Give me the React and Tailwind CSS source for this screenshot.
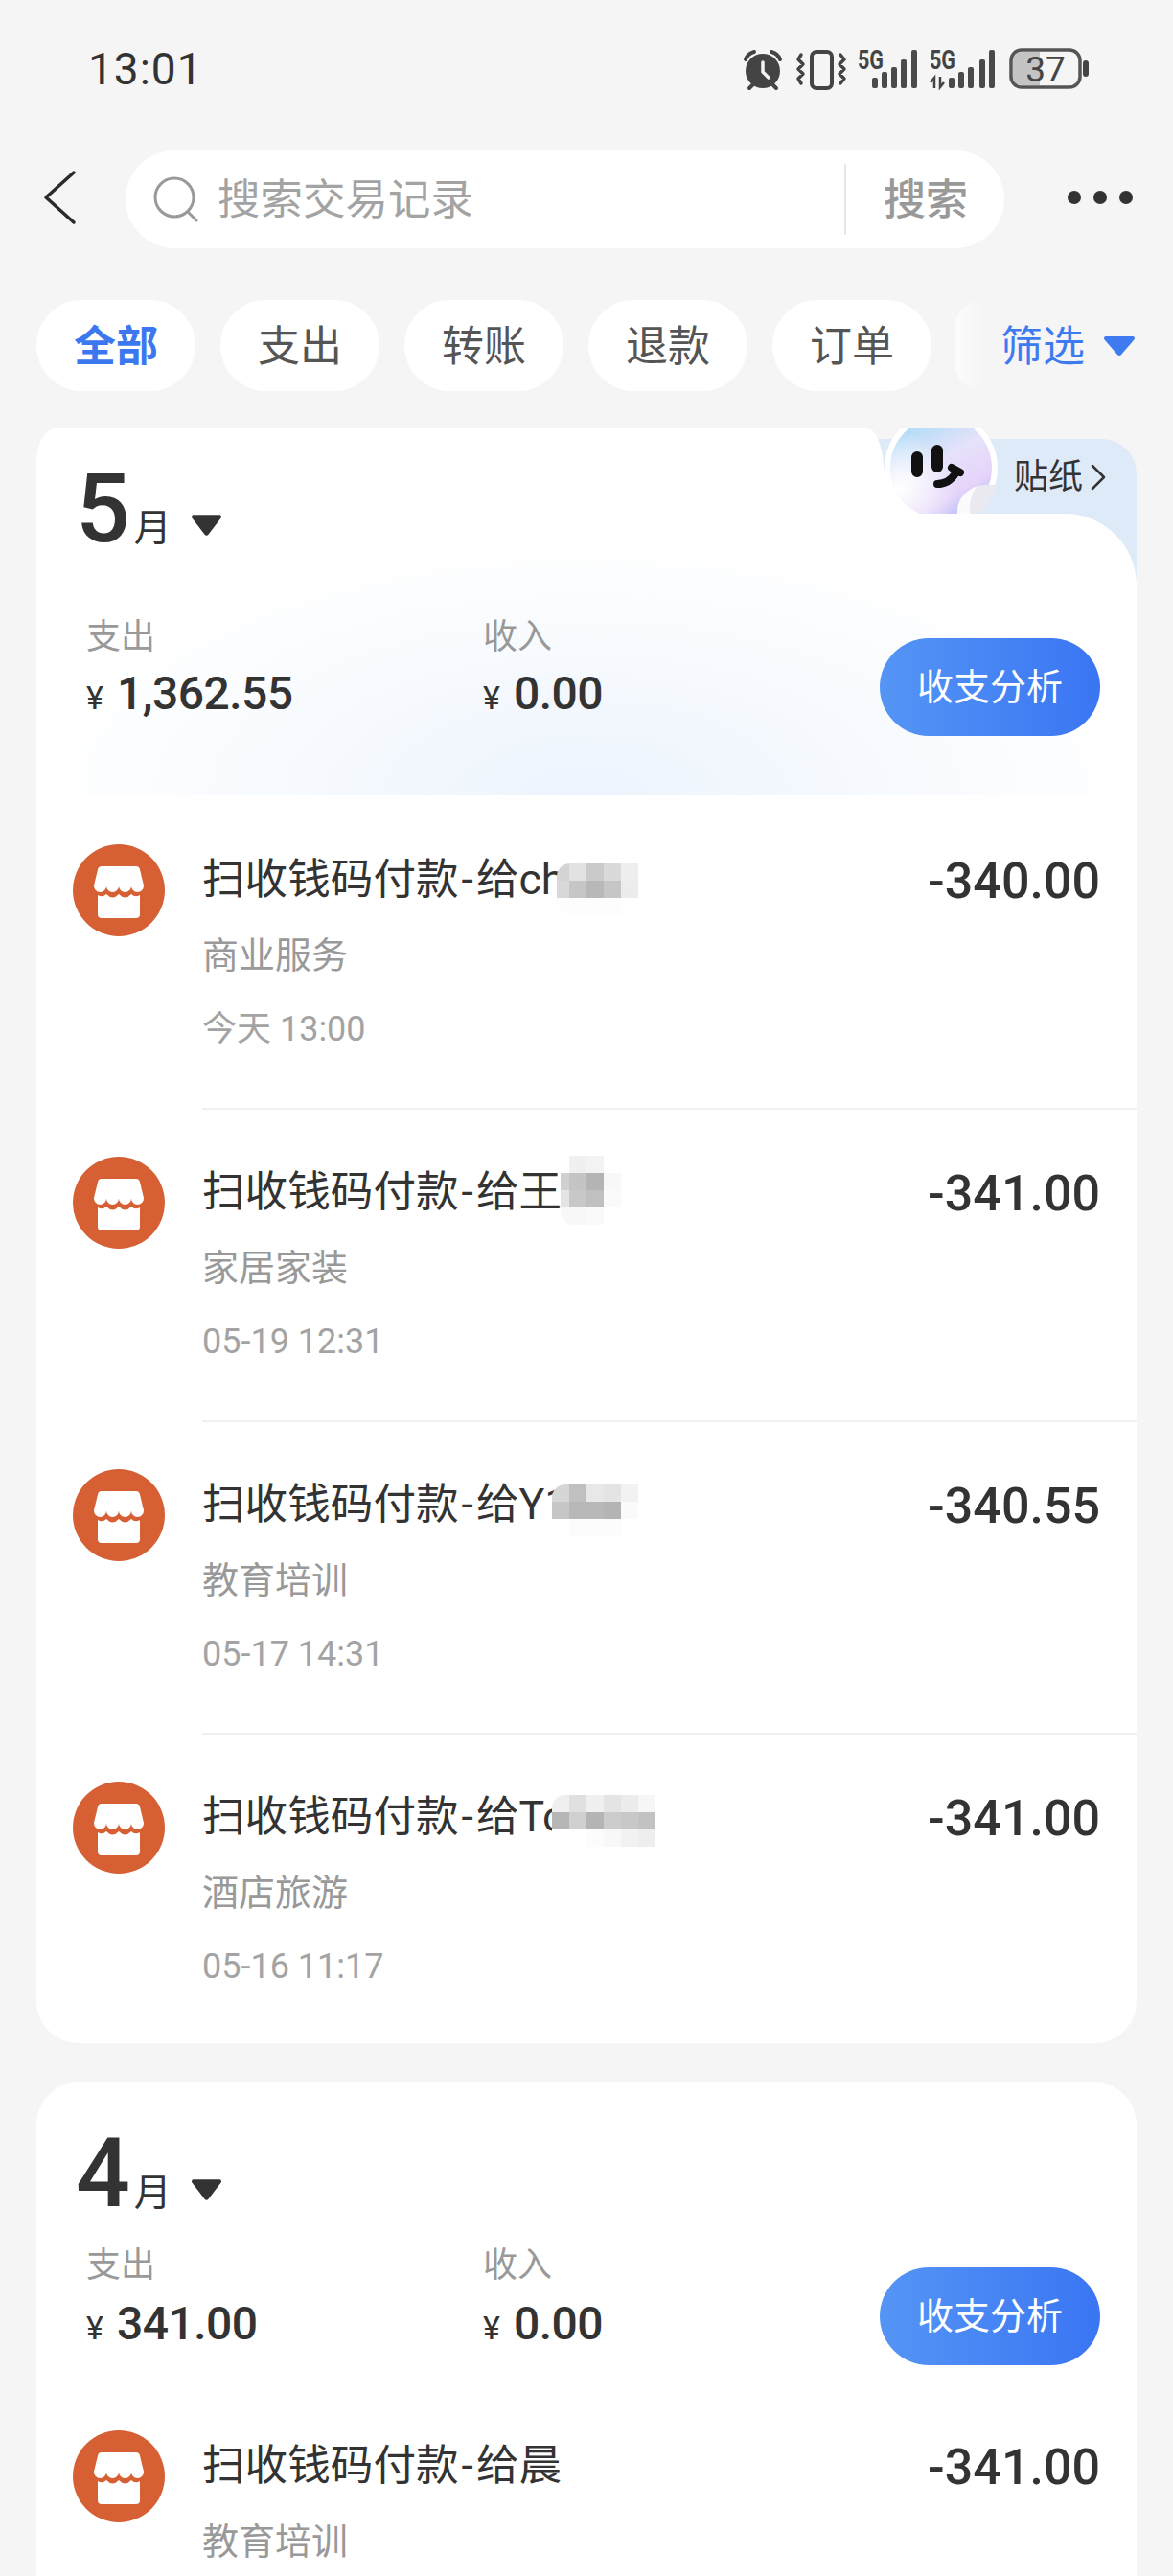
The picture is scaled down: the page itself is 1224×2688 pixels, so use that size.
import React from 'react';

const rows = [
  {
    name: 'ch', category: '商业服务', time: '今天 13:00', amount: '-340.00',
    mosaic: { top: 13, clip: 5, cells: [
      ['#d4d4d4', '#e2e2e2', '#cacaca', '#dadada', '#eeeeee'],
      ['#d8d8d8', '#c6c6c6', '#b8b8b8', '#c6c6c6', '#ececec'],
      ['#fdfdfd', '#fdfdfd', '#fdfdfd', '#fdfdfd', '#ffffff'],
    ] },
  },
  {
    name: '王', category: '家居家装', time: '05-19 12:31', amount: '-341.00',
    mosaic: { top: -8, clip: 9, cells: [
      ['#ffffff', '#f0f0f0', '#f3f3f3', '#ffffff'],
      ['#d0d0d0', '#c4c4c4', '#b4b4b4', '#f8f8f8'],
      ['#e4e4e4', '#c8c8c8', '#c0c0c0', '#fafafa'],
      ['#f8f8f8', '#f8f8f8', '#fafafa', '#ffffff'],
    ] },
  },
  {
    name: 'Y1', category: '教育培训', time: '05-17 14:31', amount: '-340.55',
    mosaic: { top: 9, clip: 0, cells: [
      ['#d6d6d6', '#c0c0c0', '#e8e8e8', '#e4e4e4', '#f2f2f2'],
      ['#c6c6c6', '#b8b8b8', '#b8b8b8', '#b4b4b4', '#fafafa'],
      ['#ffffff', '#fcfcfc', '#fcfcfc', '#fcfcfc', '#ffffff'],
    ] },
  },
  {
    name: 'To', category: '酒店旅游', time: '05-16 11:17', amount: '-341.00',
    mosaic: { top: 7, clip: 0, cells: [
      ['#efefef', '#e0e0e0', '#f0f0f0', '#e4e4e4', '#ececec', '#f6f6f6'],
      ['#b6b6b6', '#d0d0d0', '#b4b4b4', '#cccccc', '#c8c8c8', '#c2c2c2'],
      ['#ffffff', '#ffffff', '#fcfcfc', '#f8f8f8', '#f2f2f2', '#eeeeee'],
    ] },
  },
];

function StatusIcons() {
  const bars = (xs) => xs.map((x, i) => {
    const tops = [81, 75, 70, 62, 52];
    return <rect key={x} x={x} y={tops[i]} width="6" height={92 - tops[i]} rx="2" fill="#4a4a4a" />;
  });
  return (
    <svg width="370" height="50" viewBox="770 48 370 50">
      {/* alarm */}
      <circle cx="796" cy="74" r="18" fill="#444" />
      <path d="M778 62q2-6 9-8M805 54q7 2 9 8" stroke="#444" strokeWidth="4" strokeLinecap="round" fill="none" />
      <path d="M782 92l5-5M810 92l-5-5" stroke="#444" strokeWidth="4" strokeLinecap="round" />
      <path d="M796 65v10l6 6" stroke="#f5f5f5" strokeWidth="3.5" strokeLinecap="round" strokeLinejoin="round" fill="none" />
      {/* vibrate */}
      <rect x="847" y="54" width="21" height="38" rx="5" fill="none" stroke="#444" strokeWidth="4" />
      <path d="M836 57l-3 5 5 5-5 5 5 5-5 5 3 5M877 57l4 5-5 5 5 5-5 5 5 5-4 5" stroke="#444" strokeWidth="3.5" strokeLinecap="round" strokeLinejoin="round" fill="none" />
      {/* signal */}
      <text x="895" y="72" fontSize="27" fontWeight="700" fontFamily="Roboto, sans-serif" fill="#444" textLength="27" lengthAdjust="spacingAndGlyphs">5G</text>
      {bars([910, 920, 930, 940, 951])}
      <text x="970" y="72" fontSize="27" fontWeight="700" fontFamily="Roboto, sans-serif" fill="#444" textLength="27" lengthAdjust="spacingAndGlyphs">5G</text>
      <path d="M975 92V81l-4 5M981 80v11l4-5" stroke="#444" strokeWidth="2.5" fill="none" />
      {bars([990, 1000, 1010, 1022, 1032])}
      {/* battery */}
      <path d="M1066 54h19v35h-19a9 9 0 0 1-9-9V63a9 9 0 0 1 9-9Z" fill="#c4c4c4" />
      <rect x="1055" y="52" width="72" height="39" rx="11" fill="none" stroke="#555" strokeWidth="3.5" />
      <rect x="1130" y="63" width="6" height="17" rx="3" fill="#444" />
      <text x="1091" y="85" textAnchor="middle" fontSize="37" fontFamily="Roboto, sans-serif" fill="#444">37</text>
    </svg>
  );
}

function StoreIcon() {
  return (
    <svg className="w-[96px] h-[96px] shrink-0" viewBox="0 0 96 96">
      <circle cx="48" cy="48" r="48" fill="#d66034" />
      <path d="M30 23H66a4 4 0 0 1 3.8 2.8L73.5 41a6 6 0 0 1 .5 2.5a6.5 6.5 0 0 1-13 0a6.5 6.5 0 0 1-13 0a6.5 6.5 0 0 1-13 0a6.5 6.5 0 0 1-13 0a6 6 0 0 1 .5-2.5L26.2 25.8A4 4 0 0 1 30 23Z" fill="#fff" />
      <path d="M26 53Q31 56 35 52Q41.5 59 48 52Q54.5 59 61 52Q65 56 70 53V73a4 4 0 0 1-4 4H30a4 4 0 0 1-4-4Z" fill="#fff" />
    </svg>
  );
}

function Mosaic({ top, clip, cells }) {
  const w = cells[0].length * 18;
  const h = cells.length * 18;
  return (
    <svg
      className="absolute left-[365px]"
      style={{ top, clipPath: `inset(0 0 0 ${clip}px round 14px 0 0 14px)` }}
      width={w}
      height={h}
      viewBox={`0 0 ${w} ${h}`}
    >
      {cells.map((line, y) => line.map((fill, x) => (
        <rect key={`${x}-${y}`} x={x * 18} y={y * 18} width="18" height="18" fill={fill} />
      )))}
    </svg>
  );
}

function Row({ row, first, last }) {
  return (
    <div className={`flex pl-[38px] ${last ? 'h-[324px]' : 'h-[326px]'}`}>
      <div className="mt-[51px]">
        <StoreIcon />
      </div>
      <div className={`ml-[39px] flex-1 flex justify-between pr-[38px] pt-[56px] border-t-[2px] ${first ? 'border-transparent' : 'border-[#f0f0f0]'}`}>
        <div>
          <div className="relative text-[44.6px] leading-[60px] text-[#333]">
            扫收钱码付款<span className="mx-[3px]">-</span>给{row.name}
            {row.mosaic && <Mosaic {...row.mosaic} />}
          </div>
          <div className="mt-[24px] text-[38px] leading-[50px] text-[#999]">{row.category}</div>
          {row.time && <div className="mt-[32px] text-[36px] leading-[40px] text-[#a3a3a3]">{row.time}</div>}
        </div>
        <div className="mt-[2px] text-[52px] leading-[60px] font-medium text-[#333]">{row.amount}</div>
      </div>
    </div>
  );
}

function Money({ label, value, gap, className }) {
  return (
    <div className={className}>
      <div className="text-[36px] leading-[40px] text-[#999]">{label}</div>
      <div className="flex items-baseline leading-[60px] text-[#333]" style={{ marginTop: gap }}>
        <span className="text-[34px] mr-[14px]">¥</span>
        <span className="text-[48px] font-medium tracking-[-0.5px]">{value}</span>
      </div>
    </div>
  );
}

function Summary({ spend, buttonTop, gap }) {
  return (
    <div className="flex items-start pl-[52px] pr-[38px]">
      <Money label="支出" value={spend} gap={gap} className="w-[414px]" />
      <Money label="收入" value="0.00" gap={gap} className="flex-1" />
      <div
        className="flex items-center justify-center w-[230px] h-[102px] rounded-full bg-gradient-to-r from-[#5595f5] to-[#3a75f3] text-[38px] text-white"
        style={{ marginTop: buttonTop }}
      >
        收支分析
      </div>
    </div>
  );
}

function MonthTitle({ month }) {
  return (
    <div className="flex items-end h-[72px] pl-[41px] text-[#333]">
      <span className="text-[100px] leading-[72px] font-medium tracking-[-3px]">{month}</span>
      <span className="ml-[7px] text-[39px] leading-[44px] -mb-[6px]">月</span>
      <svg className="ml-[20px] mb-[7px]" width="33" height="24" viewBox="0 0 34 24">
        <path d="M3 1h28a2 2 0 0 1 1.6 3.2L19 22a2.5 2.5 0 0 1-4 0L1.4 4.2A2 2 0 0 1 3 1Z" fill="#333" />
      </svg>
    </div>
  );
}

function Sticker() {
  return (
    <svg className="absolute left-[884px] top-0 z-20" width="124" height="89" viewBox="0 0 124 89">
      <defs>
        <linearGradient id="face" x1="0.2" y1="0" x2="0.8" y2="1">
          <stop offset="0" stopColor="#a8dcf5" />
          <stop offset="0.45" stopColor="#e6e2fa" />
          <stop offset="0.75" stopColor="#e6d4fa" />
          <stop offset="1" stopColor="#aebcf5" />
        </linearGradient>
        <radialGradient id="glow" cx="0.1" cy="0.7" r="0.55">
          <stop offset="0" stopColor="#ffffff" stopOpacity="1" />
          <stop offset="1" stopColor="#ffffff" stopOpacity="0" />
        </radialGradient>
      </defs>
      <path d="M0 45H30V89H0Z" fill="#fff" />
      <circle cx="60" cy="41" r="59" fill="#fff" />
      <circle cx="60" cy="41" r="53" fill="url(#face)" />
      <circle cx="60" cy="41" r="53" fill="url(#glow)" />
      <path d="M35 30v15M56 23v17" stroke="#111" strokeWidth="12" strokeLinecap="round" />
      <path d="M56 58q12 0 19-11M71 41l9 5" stroke="#111" strokeWidth="8" strokeLinecap="round" fill="none" />
      <path d="M77 89q-1-20 21-29q10-2 19-1q-4 18-17 30Z" fill="#e9e9ef" />
      <path d="M77 89q-1-20 21-29q-9 10-8 29Z" fill="#fbfbfd" />
    </svg>
  );
}

export default function App() {
  return (
    <div className="h-[2688px] overflow-hidden bg-[#f5f5f5] font-['Roboto','Noto_Sans_CJK_SC',sans-serif]">
      {/* status bar */}
      <div className="flex justify-between h-[157px] pl-[92px] pr-[84px] pt-[48px]">
        <div className="text-[46px] leading-[48px] tracking-[1px] text-[#333]">13:01</div>
        <StatusIcons />
      </div>

      {/* search */}
      <div className="flex items-center h-[102px]">
        <svg className="ml-[44px] -mt-[4px] shrink-0" width="36" height="60" viewBox="0 0 36 60">
          <path d="M33 4L4 30l29 26" fill="none" stroke="#2b2b2b" strokeWidth="3.5" strokeLinecap="round" strokeLinejoin="round" />
        </svg>
        <div className="ml-[51px] w-[917px] h-[102px] rounded-full bg-white flex items-center pl-[29px]">
          <svg className="shrink-0" width="48" height="48" viewBox="0 0 48 48">
            <circle cx="22" cy="22" r="20" fill="none" stroke="#999" strokeWidth="3" />
            <path d="M36 37l9 9" stroke="#999" strokeWidth="3" strokeLinecap="round" />
          </svg>
          <div className="ml-[19px] mt-[2px] flex-1 text-[44.5px] text-[#a3a3a3]">搜索交易记录</div>
          <div className="w-[2px] h-[74px] bg-[#e6e6e6]" />
          <div className="ml-[39px] mr-[38px] mt-[2px] text-[44px] font-medium text-[#999]">搜索</div>
        </div>
        <div className="ml-[66px] -mt-[5px] flex gap-[13px]">
          <span className="w-[14px] h-[14px] rounded-full bg-[#333]" />
          <span className="w-[14px] h-[14px] rounded-full bg-[#333]" />
          <span className="w-[14px] h-[14px] rounded-full bg-[#333]" />
        </div>
      </div>

      {/* filter tabs */}
      <div className="flex items-center h-[95px] mt-[54px] pl-[38px] text-[44px]">
        <div className="flex items-center justify-center w-[166px] h-[95px] pt-[2px] rounded-full bg-white font-bold text-[#3b78f0]">全部</div>
        {['支出', '转账', '退款', '订单'].map((tab) => (
          <div key={tab} className="ml-[26px] flex items-center justify-center w-[166px] h-[95px] pt-[2px] rounded-full bg-white text-[#555]">{tab}</div>
        ))}
        <div className="ml-[24px] w-[30px] h-[95px] rounded-l-full bg-gradient-to-r from-[#fcfcfc] to-[#f5f5f5]" />
        <div className="ml-[18px] pt-[2px] text-[#3f7bf0]">筛选</div>
        <svg className="ml-[19px]" width="34" height="22" viewBox="0 0 34 22">
          <path d="M3 1h28a2 2 0 0 1 1.6 3.2L19 20a2.5 2.5 0 0 1-4 0L1.4 4.2A2 2 0 0 1 3 1Z" fill="#3f7bf0" />
        </svg>
      </div>

      {/* may */}
      <section className="relative mx-[38px] mt-[39px]">
        <div className="absolute right-0 top-[11px] w-[300px] h-[170px] rounded-tr-[36px] bg-[#dfeaf8]" />
        <Sticker />
        <div className="absolute left-[1020px] top-[23px] z-20 flex items-center h-[56px] text-[36px] text-[#333]">
          贴纸
          <svg className="ml-[8px]" width="16" height="28" viewBox="0 0 16 28">
            <path d="M2 2l12 12L2 26" fill="none" stroke="#333" strokeWidth="2.5" strokeLinecap="round" strokeLinejoin="round" />
          </svg>
        </div>
        <div className="relative z-10">
          <div className="w-[885px] h-[89px] pt-[48px] bg-white rounded-tl-[20px_36px] rounded-tr-[18px_53px]">
            <MonthTitle month="5" />
          </div>
          <div className="h-[294px] pt-[109px] rounded-tr-[75px] bg-white bg-[radial-gradient(ellipse_580px_270px_at_50%_100%,#edf4fd,#ffffff)]">
            <Summary spend="1,362.55" buttonTop={21} gap={9} />
          </div>
          <div className="bg-white rounded-b-[44px]">
            {rows.map((row, i) => (
              <Row key={row.name} row={row} first={i === 0} last={i === rows.length - 1} />
            ))}
          </div>
        </div>
      </section>

      {/* april */}
      <section className="mx-[38px] mt-[41px] pt-[59px] bg-white rounded-t-[44px] rounded-b-[44px]">
        <MonthTitle month="4" />
        <div className="mt-[40px] h-[141px]">
          <Summary spend="341.00" buttonTop={22} gap={11} />
        </div>
        <Row row={{ name: '晨', category: '教育培训', amount: '-341.00' }} first />
      </section>
    </div>
  );
}
